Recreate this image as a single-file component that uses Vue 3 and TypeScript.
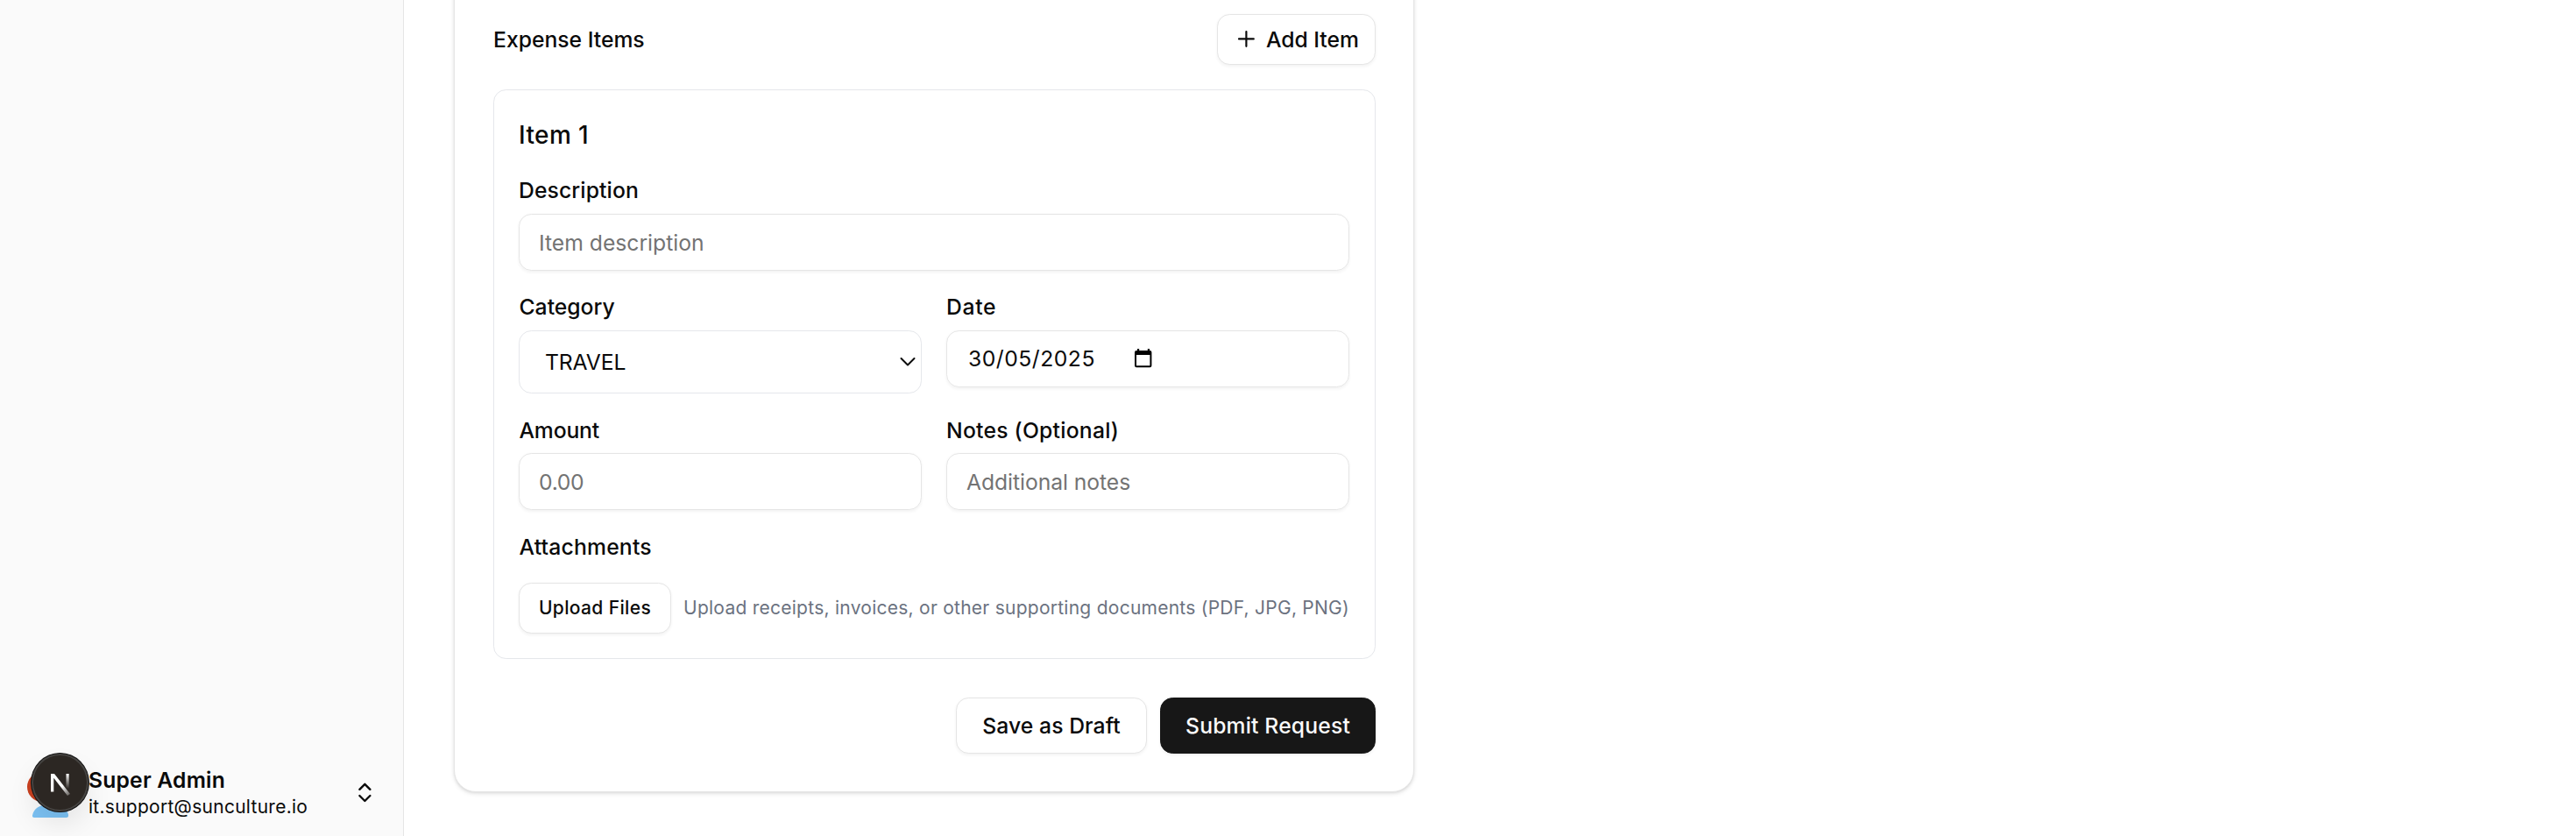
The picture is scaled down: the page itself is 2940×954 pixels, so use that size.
<script setup lang="ts">
import { ref } from 'vue'

interface Account {
  name: string
  email: string
}

const account: Account = { name: 'Super Admin', email: 'it.support@sunculture.io' }
const category = ref('TRAVEL')
const date = ref('30/05/2025')
</script>

<template>
  <div class="page">
    <aside class="sidebar">
      <div class="account">
        <div class="avatar">
          <svg class="portrait" width="56" height="58" viewBox="0 0 56 58" aria-hidden="true">
            <circle cx="18" cy="23" r="17" fill="#c8401f" />
            <path d="M9 58C7.500 58 6.700 57 7 55.500C8.500 48 15 42.500 28 42.500S46.500 48 48 54.500C48.400 57 47.500 58 45.500 58Z" fill="#7cc2f4" />
          </svg>
          <div class="dev-badge">
            <svg width="68" height="68" viewBox="0 0 68 68" fill="none" aria-hidden="true">
              <defs>
                <linearGradient id="stem" x1="0" y1="24" x2="0" y2="41" gradientUnits="userSpaceOnUse">
                  <stop offset="0" stop-color="#fff" />
                  <stop offset="1" stop-color="#fff" stop-opacity="0" />
                </linearGradient>
                <linearGradient id="slash" x1="36" y1="38" x2="45" y2="49" gradientUnits="userSpaceOnUse">
                  <stop offset="0" stop-color="#fff" />
                  <stop offset="1" stop-color="#fff" stop-opacity="0.2" />
                </linearGradient>
              </defs>
              <rect x="40.500" y="24" width="3.200" height="17" fill="url(#stem)" />
              <path d="M23 24h4L45 47l-3 2L26.300 28.800V44.500H23Z" fill="url(#slash)" />
            </svg>
          </div>
        </div>
        <div class="identity">
          <span class="name">{{ account.name }}</span>
          <span class="email">{{ account.email }}</span>
        </div>
        <svg class="toggle" width="28.8" height="28.8" viewBox="0 0 24 24" aria-hidden="true">
          <path d="m7 15 5 5 5-5M7 9l5-5 5 5" />
        </svg>
      </div>
    </aside>

    <main class="content">
      <section class="card">
        <header class="card-head">
          <h2 class="section-title">Expense Items</h2>
          <button class="button add" type="button">
            <svg width="28.8" height="28.8" viewBox="0 0 24 24" aria-hidden="true"><path d="M5 12h14M12 5v14" /></svg>
            <span>Add Item</span>
          </button>
        </header>

        <article class="item">
          <h3 class="item-title">Item 1</h3>
          <div class="field">
            <span class="label description">Description</span>
            <div class="control hint item-description">Item description</div>
          </div>
          <div class="row">
            <div class="field">
              <span class="label category">Category</span>
              <div class="control select">
                <span>{{ category }}</span>
                <svg width="18" height="12" viewBox="0 0 18 12" aria-hidden="true"><path d="m1.500 2 7.500 7.500L16.500 2" /></svg>
              </div>
            </div>
            <div class="field">
              <span class="label date-label">Date</span>
              <div class="control date">
                <span>{{ date }}</span>
                <svg width="20" height="22" viewBox="0 0 20 22" aria-hidden="true">
                  <path d="M3 0h2.200v2h9.600V0H17v2h.500Q19.400 2 19.400 4V19.300Q19.400 21.300 17.400 21.300H2Q0 21.300 0 19.300V4Q0 2 2 2h1ZM2 7v12.300h15.400V7Z" fill-rule="evenodd" />
                </svg>
              </div>
            </div>
          </div>
          <div class="row tight">
            <div class="field">
              <span class="label amount">Amount</span>
              <div class="control hint number">0.00</div>
            </div>
            <div class="field">
              <span class="label notes">Notes (Optional)</span>
              <div class="control hint additional">Additional notes</div>
            </div>
          </div>
          <div class="field attachments">
            <span class="label">Attachments</span>
            <div class="upload">
              <button class="button small" type="button">Upload Files</button>
              <span class="note">Upload receipts, invoices, or other supporting documents (PDF, JPG, PNG)</span>
            </div>
          </div>
        </article>

        <footer class="actions">
          <button class="button save" type="button">Save as Draft</button>
          <button class="button submit" type="button">Submit Request</button>
        </footer>
      </section>
    </main>
  </div>
</template>

<style>
body {
  margin: 0;
  background: #fff;
}
</style>

<style scoped>
* {
  box-sizing: border-box;
}

.page {
  display: flex;
  height: 954px;
  overflow: hidden;
  background: #fff;
  color: #0a0a0a;
  font-family: Inter, "Liberation Sans", sans-serif;
  font-size: 24.7px;
  white-space: nowrap;
}

.sidebar {
  display: flex;
  flex: none;
  flex-direction: column;
  justify-content: flex-end;
  width: 461px;
  border-right: 1px solid #e5e5e5;
  background: #fafafa;
}

.account {
  display: flex;
  align-items: center;
  height: 58px;
  margin: 0 29px 21px 30px;
}

.avatar {
  position: relative;
  flex: none;
  width: 56px;
  height: 58px;
}

.portrait {
  display: block;
}

.dev-badge {
  position: absolute;
  top: -16px;
  left: 5px;
  width: 67px;
  height: 68px;
  border: 1px solid #171717;
  border-radius: 50%;
  background: #2c2723;
  box-shadow: inset 0 0 0 2px #464442, 0 16px 32px -4px rgba(0, 0, 0, 0.1);
}

.dev-badge svg {
  display: block;
  margin: -1px;
}

.identity {
  display: flex;
  flex: 1;
  flex-direction: column;
  margin-left: 15px;
}

.name {
  font-weight: 600;
  line-height: 31px;
  letter-spacing: 0.18px;
}

.email {
  padding-top: 1px;
  font-size: 21px;
  line-height: 27px;
  letter-spacing: 0.27px;
}

.toggle {
  fill: none;
  stroke: currentColor;
  stroke-width: 2;
  stroke-linecap: round;
  stroke-linejoin: round;
}

.content {
  padding-left: 57px;
}

.card {
  width: 1096px;
  height: 944px;
  margin-top: -40px;
  padding: 55px 43px 43px 44px;
  border: 1px solid #e5e5e5;
  border-radius: 25px;
  background: #fff;
  box-shadow: 0 1.8px 5.4px rgba(0, 0, 0, 0.1), 0 1.8px 3.6px -1.8px rgba(0, 0, 0, 0.1);
}

.card-head {
  display: flex;
  align-items: center;
  justify-content: space-between;
  margin-bottom: 28px;
}

.section-title,
.item-title {
  margin: 0;
  font-weight: 500;
}

.section-title {
  font-size: inherit;
  letter-spacing: 0;
}

.button {
  display: flex;
  align-items: center;
  justify-content: center;
  height: 64px;
  padding: 0;
  border: 1px solid #e5e5e5;
  border-radius: 14.4px;
  background: #fff;
  color: #0a0a0a;
  font: inherit;
  font-weight: 500;
  box-shadow: 0 1.8px 3.6px rgba(0, 0, 0, 0.05);
}

.add {
  gap: 8px;
  width: 181px;
  height: 58px;
  letter-spacing: -0.02px;
}

.add svg {
  margin-bottom: 1px;
  fill: none;
  stroke: currentColor;
  stroke-width: 1.8;
  stroke-linecap: round;
}

.item {
  height: 650px;
  padding: 28px;
  border: 1px solid #e5e7eb;
  border-radius: 14.4px;
}

.item-title {
  margin-bottom: 22px;
  font-size: 28px;
  line-height: 46px;
  letter-spacing: 0.4px;
}

.field {
  display: flex;
  flex-direction: column;
  width: 100%;
}

.label {
  margin-bottom: 9px;
  font-weight: 500;
  line-height: 36px;
  letter-spacing: 0.2px;
}

.item > .field {
  width: 948px;
}

.control {
  display: flex;
  align-items: center;
  height: 65px;
  padding: 0 22px;
  border: 1px solid #e5e5e5;
  border-radius: 14.4px;
  box-shadow: 0 1.8px 3.6px rgba(0, 0, 0, 0.05);
}

.hint {
  color: #737373;
}

.row {
  display: grid;
  grid-template-columns: 460px 460px;
  gap: 28px;
  margin-top: 23px;
}

.tight {
  margin-top: 24px;
}

.tight .label {
  margin-bottom: 8px;
}

.description {
  letter-spacing: 0.12px;
}

.item-description {
  letter-spacing: 0;
}

.category {
  padding-left: 0.5px;
  letter-spacing: 0;
}

.select {
  justify-content: space-between;
  height: 72px;
  padding: 0 6px 0 29px;
  border-color: #e5e7eb;
  box-shadow: none;
  letter-spacing: -0.1px;
}

.select svg {
  fill: none;
  stroke: currentColor;
  stroke-width: 2;
  stroke-linecap: round;
  stroke-linejoin: round;
}

.date-label {
  letter-spacing: 0.65px;
}

.date {
  gap: 45px;
  padding-bottom: 2px;
  padding-left: 24px;
  letter-spacing: 0.5px;
}

.amount {
  padding-left: 0.5px;
  letter-spacing: -0.15px;
}

.number {
  letter-spacing: -0.3px;
}

.notes {
  letter-spacing: 0.24px;
}

.additional {
  letter-spacing: -0.06px;
}

.attachments {
  margin-top: 24px;
}

.attachments .label {
  margin-bottom: 23px;
  padding-left: 0.5px;
}

.upload {
  display: flex;
  align-items: center;
  gap: 14px;
}

.small {
  flex: none;
  width: 174px;
  height: 58px;
  padding-bottom: 2px;
  font-size: 21px;
  letter-spacing: 0.36px;
}

.note {
  padding-bottom: 2px;
  color: #6b7280;
  font-size: 21px;
  letter-spacing: 0.255px;
}

.actions {
  display: flex;
  justify-content: flex-end;
  gap: 15px;
  margin-top: 44px;
}

.save {
  width: 218px;
  letter-spacing: 0.08px;
}

.submit {
  width: 246px;
  border-color: #171717;
  background: #171717;
  color: #fafafa;
  letter-spacing: 0.16px;
}
</style>
